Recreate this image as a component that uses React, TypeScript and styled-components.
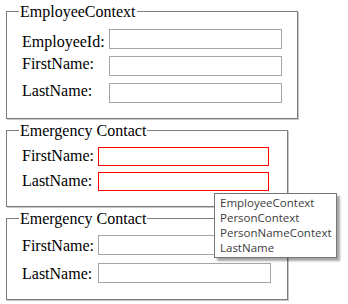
import React from "react";
import styled, { createGlobalStyle } from "styled-components";

const Global = createGlobalStyle`
  html, body { margin: 0; padding: 0; background: #ffffff; }
  body { font-family: "Liberation Serif", "Times New Roman", serif; font-size: 16px; color: #000; }
`;

const Page = styled.div`
  position: relative;
  width: 348px;
  height: 304px;
  padding: 2px 0 0 6px;
  box-sizing: border-box;
  display: flex;
  flex-direction: column;
  gap: 2px;
  overflow: hidden;
`;

const Group = styled.fieldset<{ $w: number; $pt: number; $pb: number; $gap: number }>`
  box-sizing: border-box;
  width: ${(p) => p.$w}px;
  margin: 0;
  padding: ${(p) => p.$pt}px 0 ${(p) => p.$pb}px 15px;
  border: 1px solid #7d7d7d;
  box-shadow: 1px 1px 0 #c6c6c6;
  display: flex;
  flex-direction: column;
  gap: ${(p) => p.$gap}px;
  min-width: 0;
`;

const Header = styled.legend`
  margin-left: -3px;
  padding: 0 1px;
  font-size: 16px;
  line-height: 19px;
  height: 19px;
`;

const Row = styled.div<{ $h: number }>`
  display: flex;
  align-items: flex-start;
  height: ${(p) => p.$h}px;
`;

const Label = styled.span<{ $w: number; $dy: number }>`
  width: ${(p) => p.$w}px;
  flex: none;
  line-height: 20px;
  margin-top: ${(p) => p.$dy}px;
  white-space: nowrap;
`;

const Field = styled.div<{ $w: number; $h: number; $error?: boolean }>`
  box-sizing: border-box;
  width: ${(p) => p.$w}px;
  height: ${(p) => p.$h}px;
  flex: none;
  background: #fff;
  border: 1px solid ${(p) => (p.$error ? "#ff0000" : "#a5a5a5")};
`;

const Tip = styled.div`
  position: absolute;
  left: 214px;
  top: 193px;
  width: 123px;
  height: 65px;
  box-sizing: border-box;
  background: #fff;
  border: 1px solid #767676;
  box-shadow: 3px 3px 2px rgba(0, 0, 0, 0.35);
  padding: 1px 0 0 5px;
  font-family: "Open Sans", "Noto Sans", sans-serif;
  font-size: 11.5px;
  line-height: 15px;
  color: #3c3c3c;
  display: flex;
  flex-direction: column;
`;

const TipLine = styled.span`
  white-space: nowrap;
`;

export default function App() {
  return (
    <>
      <Global />
      <Page>
        <Group $w={292} $pt={8} $pb={15} $gap={7}>
          <Header>EmployeeContext</Header>
          <Row $h={20}>
            <Label $w={87} $dy={3}>EmployeeId:</Label>
            <Field $w={173} $h={20} />
          </Row>
          <Row $h={20}>
            <Label $w={87} $dy={-2}>FirstName:</Label>
            <Field $w={173} $h={20} />
          </Row>
          <Row $h={20}>
            <Label $w={87} $dy={-2}>LastName:</Label>
            <Field $w={173} $h={20} />
          </Row>
        </Group>
        <Group $w={282} $pt={7} $pb={15} $gap={6}>
          <Header>Emergency Contact</Header>
          <Row $h={19}>
            <Label $w={76} $dy={-1}>FirstName:</Label>
            <Field $w={171} $h={19} $error />
          </Row>
          <Row $h={19}>
            <Label $w={76} $dy={-1}>LastName:</Label>
            <Field $w={171} $h={19} $error />
          </Row>
        </Group>
        <Group $w={282} $pt={7} $pb={16} $gap={8}>
          <Header>Emergency Contact</Header>
          <Row $h={20}>
            <Label $w={76} $dy={1}>FirstName:</Label>
            <Field $w={173} $h={20} />
          </Row>
          <Row $h={20}>
            <Label $w={76} $dy={1}>LastName:</Label>
            <Field $w={173} $h={20} />
          </Row>
        </Group>
        <Tip>
          <TipLine>EmployeeContext</TipLine>
          <TipLine>PersonContext</TipLine>
          <TipLine>PersonNameContext</TipLine>
          <TipLine>LastName</TipLine>
        </Tip>
      </Page>
    </>
  );
}
